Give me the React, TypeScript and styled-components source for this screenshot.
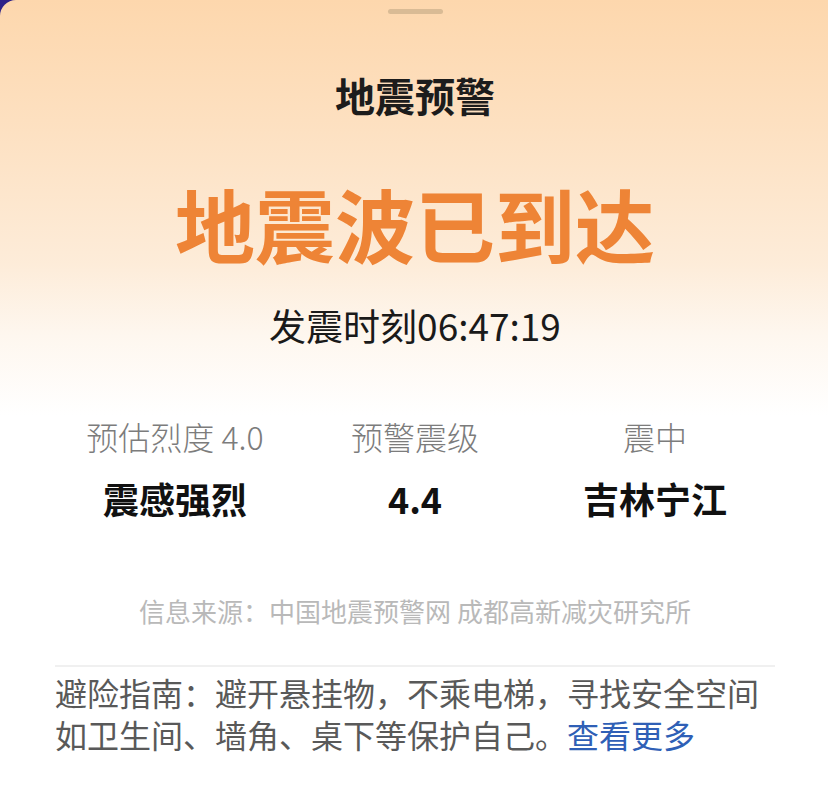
import styled, { createGlobalStyle } from 'styled-components';

const GlobalStyle = createGlobalStyle`
  html, body {
    margin: 0;
    padding: 0;
    background: #2d2188;
  }
  body {
    font-family: "Noto Sans CJK SC", "Noto Sans", sans-serif;
  }
`;

const Sheet = styled.div`
  width: 828px;
  height: 800px;
  box-sizing: border-box;
  padding: 9px 53px 0 55px;
  border-top-left-radius: 16px;
  overflow: hidden;
  display: flex;
  flex-direction: column;
  background: linear-gradient(
    180deg,
    #fdd7ad 0%,
    #fde0c0 15%,
    #fdecd9 33%,
    #fef7ef 42%,
    #ffffff 52%,
    #ffffff 100%
  );
`;

const Handle = styled.div`
  width: 55px;
  height: 5px;
  border-radius: 3px;
  background: #d9bb95;
  align-self: center;
`;

const Title = styled.h1`
  margin: 61px 0 0;
  font-size: 40px;
  line-height: 40px;
  font-weight: 700;
  color: #1c1c1c;
  text-align: center;
`;

const Headline = styled.div`
  margin-top: 67px;
  font-size: 80px;
  line-height: 80px;
  font-weight: 700;
  color: #ee8436;
  text-align: center;
`;

const Time = styled.div`
  margin-top: 45px;
  font-size: 37px;
  line-height: 37px;
  color: #1a1a1a;
  text-align: center;
`;

const Stats = styled.div`
  margin-top: 76px;
  display: grid;
  grid-template-columns: repeat(3, 1fr);
`;

const Stat = styled.div`
  display: flex;
  flex-direction: column;
  align-items: center;
  gap: 28px;
`;

const Label = styled.div`
  font-size: 32px;
  line-height: 32px;
  font-weight: 300;
  color: #7c7c7c;
`;

const Value = styled.div`
  font-size: 36px;
  line-height: 36px;
  font-weight: 700;
  color: #111;
`;

const Source = styled.div`
  margin-top: 81px;
  font-size: 26px;
  line-height: 27px;
  color: #b9b9b9;
  text-align: center;
`;

const Divider = styled.hr`
  margin: 41px 0 0;
  border: 0;
  border-top: 2px solid #f0f0f0;
`;

const Guide = styled.p`
  margin: 4px 0 0;
  font-size: 32px;
  line-height: 42px;
  color: #595959;
  white-space: nowrap;
`;

const More = styled.a`
  color: #2f5fb6;
  text-decoration: none;
`;

const stats = [
  { label: '预估烈度 4.0', value: '震感强烈' },
  { label: '预警震级', value: '4.4' },
  { label: '震中', value: '吉林宁江' },
];

const App: React.FC = () => {
  return (
    <>
      <GlobalStyle />
      <Sheet>
        <Handle />
        <Title>地震预警</Title>
        <Headline>地震波已到达</Headline>
        <Time>发震时刻06:47:19</Time>
        <Stats>
          {stats.map((s) => (
            <Stat key={s.label}>
              <Label>{s.label}</Label>
              <Value>{s.value}</Value>
            </Stat>
          ))}
        </Stats>
        <Source>信息来源：中国地震预警网 成都高新减灾研究所</Source>
        <Divider />
        <Guide>
          避险指南：避开悬挂物，不乘电梯，寻找安全空间
          <br />
          如卫生间、墙角、桌下等保护自己。<More href="#">查看更多</More>
        </Guide>
      </Sheet>
    </>
  );
};

export default App;
